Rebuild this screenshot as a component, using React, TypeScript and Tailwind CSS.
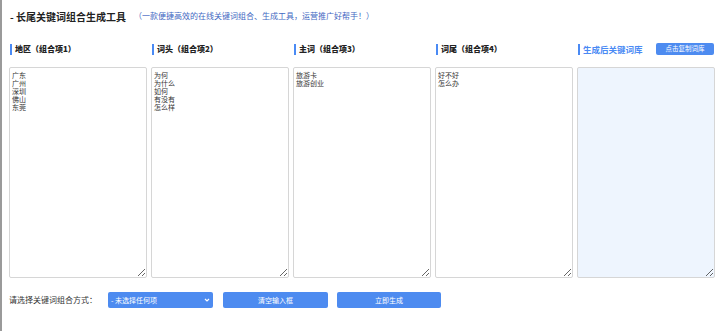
import { useState } from 'react';

const font = "font-['Microsoft_YaHei','Noto_Sans_CJK_SC',sans-serif]";

const columns = [
  { title: '地区（组合项1）', value: '广东\n广州\n深圳\n佛山\n东莞' },
  { title: '词头（组合项2）', value: '为何\n为什么\n如何\n有没有\n怎么样' },
  { title: '主词（组合项3）', value: '旅游卡\n旅游创业' },
  { title: '词尾（组合项4）', value: '好不好\n怎么办' },
];

const App = () => {
  const [values, setValues] = useState(columns.map((c) => c.value));
  const [result, setResult] = useState('');

  return (
    <div className={`h-[331px] w-[720px] overflow-hidden bg-white border-l-2 border-[#9a9a9a] ${font}`}>
      <div className="flex items-center pl-[8px] pt-[9px] h-[23px]">
        <h1 className="text-[10px] font-bold text-[#222]">- 长尾关键词组合生成工具</h1>
        <span className="ml-[8px] text-[8px] text-[#3f67c2]">（一款便捷高效的在线关键词组合、生成工具，运营推广好帮手！）</span>
      </div>

      <div className="grid grid-cols-5 gap-x-[4px] pl-[7px] pr-[5px] mt-[20px]">
        {columns.map((c, i) => (
          <div key={c.title} className="flex flex-col">
            <div className="flex items-center h-[12px] pl-[1px]">
              <span className="w-[2px] h-[11px] bg-[#4a8af4]" />
              <span className="ml-[3px] text-[8px] font-extrabold text-[#222]">{c.title}</span>
            </div>
            <textarea
              value={values[i]}
              onChange={(e) => setValues(values.map((v, j) => (j === i ? e.target.value : v)))}
              className="mt-[12px] h-[211px] w-full rounded-[2px] border border-[#d6d6d6] bg-white px-[2px] pt-[3px] text-[7px] leading-[8px] text-[#333] outline-none"
            />
          </div>
        ))}
        <div className="flex flex-col">
          <div className="flex items-center h-[12px] pl-[1px]">
            <span className="w-[2px] h-[11px] bg-[#4a8af4]" />
            <span className="ml-[3px] text-[8.5px] font-semibold text-[#4a8af4]">生成后关键词库</span>
            <button className="ml-auto mr-[1px] h-[12px] w-[58px] rounded-[2px] bg-[#4d8bf0] text-[6.5px] text-white">
              点击复制词库
            </button>
          </div>
          <textarea
            value={result}
            onChange={(e) => setResult(e.target.value)}
            className="mt-[12px] h-[211px] w-full rounded-[2px] border border-[#d6d6d6] bg-[#eef5fe] px-[2px] pt-[3px] text-[7px] leading-[8px] text-[#333] outline-none"
          />
        </div>
      </div>

      <div className="flex items-center pl-[7px] mt-[14px] h-[16px]">
        <span className="text-[8px] text-[#333] w-[99px]">请选择关键词组合方式：</span>
        <div className="relative w-[105px] h-[16px] rounded-[2px] bg-[#4d8bf0] text-white">
          <span className="absolute left-[3px] top-[3px] text-[7px] leading-[10px]">- 未选择任何项</span>
          <svg className="absolute right-[3px] top-[5px]" width="6" height="6" viewBox="0 0 6 6">
            <path d="M1 2 L3 4 L5 2" fill="none" stroke="white" strokeWidth="1.2" />
          </svg>
        </div>
        <button className="ml-[10px] w-[105px] h-[16px] rounded-[2px] bg-[#4d8bf0] text-[7px] text-white">清空输入框</button>
        <button className="ml-[9px] w-[104px] h-[16px] rounded-[2px] bg-[#4d8bf0] text-[7px] text-white">立即生成</button>
      </div>
    </div>
  );
};

export default App;
